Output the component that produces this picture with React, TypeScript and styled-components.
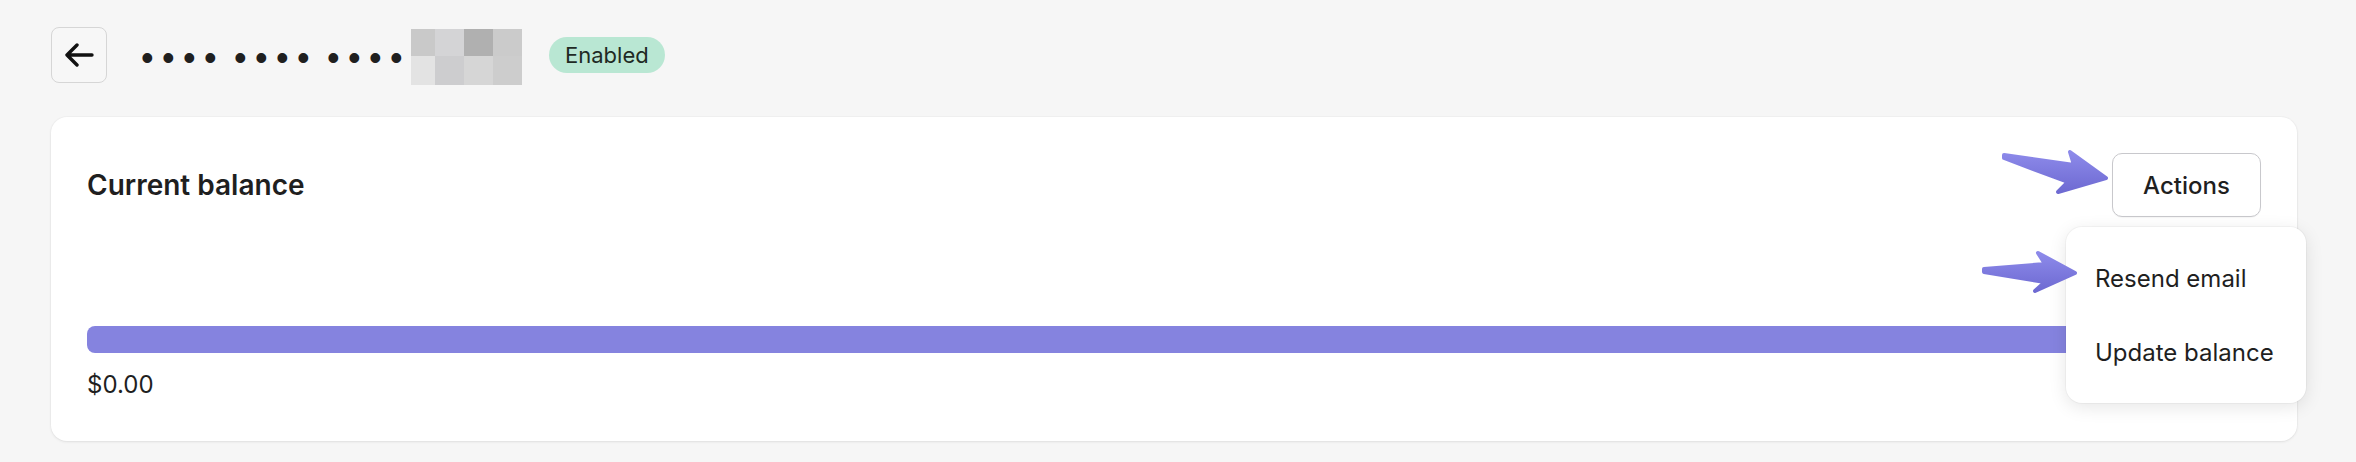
import React from "react";
import styled, { createGlobalStyle } from "styled-components";

const GlobalStyle = createGlobalStyle`
  html, body {
    margin: 0;
    padding: 0;
    background: #f6f6f6;
    font-family: Inter, "Noto Sans", "Liberation Sans", sans-serif;
    color: #1f1f1f;
  }
`;

const Page = styled.div`
  padding: 27px 59px 20px 51px;
  display: flex;
  flex-direction: column;
  gap: 34px;
`;

const TopBar = styled.div`
  display: flex;
  align-items: center;
  height: 56px;
`;

const BackButton = styled.button`
  width: 56px;
  height: 56px;
  box-sizing: border-box;
  border: 1px solid #d6d6d6;
  border-radius: 8px;
  background: #f7f7f7;
  display: flex;
  align-items: center;
  justify-content: center;
  padding: 0;
  margin-right: 34px;
`;

const Masked = styled.div`
  display: flex;
  gap: 9px;
`;

const DotGroup = styled.span`
  font-family: "Liberation Sans", Arial, sans-serif;
  font-size: 36px;
  letter-spacing: 8.4px;
  color: #1f1f1f;
  line-height: 56px;
  padding-top: 6px;
`;

const Blur = styled.div`
  display: grid;
  grid-template-columns: 24px 29px 29px 29px;
  grid-template-rows: 27px 29px;
  margin-right: 27px;
  margin-top: 4px;
`;

const BlurCell = styled.div<{ $c: string }>`
  background: ${(p) => p.$c};
`;

const Badge = styled.span`
  display: inline-flex;
  align-items: center;
  height: 36px;
  padding: 0 16px;
  border-radius: 18px;
  background: #b9e7d3;
  font-size: 22px;
  color: #1f2a24;
`;

const Card = styled.div`
  background: #ffffff;
  border-radius: 16px;
  box-shadow: 0 1px 3px rgba(0, 0, 0, 0.08), 0 0 0 1px rgba(0, 0, 0, 0.02);
  padding: 36px 36px 42px 36px;
  height: 324px;
  box-sizing: border-box;
`;

const CardHeader = styled.div`
  display: flex;
  align-items: center;
  justify-content: space-between;
  height: 64px;
`;

const Title = styled.h2`
  margin: 0;
  font-size: 28px;
  font-weight: 600;
  color: #1f1f1f;
`;

const ActionsWrap = styled.div`
  position: relative;
`;

const ActionsButton = styled.button`
  width: 149px;
  height: 64px;
  box-sizing: border-box;
  border: 1px solid #c8c8cc;
  border-radius: 10px;
  background: #ffffff;
  font-family: inherit;
  font-size: 24px;
  font-weight: 500;
  color: #1f1f1f;
  box-shadow: 0 1px 1px rgba(0, 0, 0, 0.04);
`;

const Pointer = styled.svg<{ $left: number; $top: number }>`
  position: absolute;
  left: ${(p) => p.$left}px;
  top: ${(p) => p.$top}px;
  overflow: visible;
  z-index: 3;
`;

const Menu = styled.div`
  position: absolute;
  top: 74px;
  right: -45px;
  width: 240px;
  box-sizing: border-box;
  padding: 14px 0;
  background: #ffffff;
  border-radius: 16px;
  box-shadow: 0 4px 18px rgba(0, 0, 0, 0.1), 0 0 0 1px rgba(0, 0, 0, 0.03);
  z-index: 2;
`;

const MenuItem = styled.div`
  height: 74px;
  display: flex;
  align-items: center;
  padding-left: 29px;
  font-size: 24px;
  color: #1f1f1f;
  white-space: nowrap;
`;

const Bar = styled.div`
  margin-top: 109px;
  height: 27px;
  border-radius: 8px;
  background: #8583df;
`;

const Amount = styled.div`
  margin-top: 17px;
  font-size: 24px;
  line-height: 29px;
  color: #1f1f1f;
`;

const blur = [
  "#c9c9c9",
  "#d4d4d6",
  "#b0b0b0",
  "#cbcbcb",
  "#e3e3e3",
  "#cdcdcf",
  "#d6d6d6",
  "#cdcdcd",
];

function ArrowShape({ d, id }: { d: string; id: string }) {
  return (
    <>
      <defs>
        <linearGradient id={id} x1="0" y1="0" x2="0" y2="1">
          <stop offset="0" stopColor="#8d8aea" />
          <stop offset="1" stopColor="#6e6ad2" />
        </linearGradient>
      </defs>
      <path
        d={d}
        fill={`url(#${id})`}
        stroke={`url(#${id})`}
        strokeWidth="4"
        strokeLinejoin="round"
      />
    </>
  );
}

export default function App() {
  return (
    <>
      <GlobalStyle />
      <Page>
        <TopBar>
          <BackButton aria-label="Back">
            <svg width="30" height="24" viewBox="0 0 30 24" fill="none">
              <path
                d="M28 12H3M13 2L3 12l10 10"
                stroke="#111"
                strokeWidth="3.4"
                strokeLinecap="round"
                strokeLinejoin="round"
              />
            </svg>
          </BackButton>
          <Masked>
            <DotGroup>••••</DotGroup>
            <DotGroup>••••</DotGroup>
            <DotGroup>••••</DotGroup>
          </Masked>
          <Blur>
            {blur.map((c, i) => (
              <BlurCell key={i} $c={c} />
            ))}
          </Blur>
          <Badge>Enabled</Badge>
        </TopBar>

        <Card>
          <CardHeader>
            <Title>Current balance</Title>
            <ActionsWrap>
              <Pointer $left={-112} $top={-7} width="110" height="50" viewBox="0 0 110 50">
                <ArrowShape
                  id="g1"
                  d="M4 9 L74 19 L70 6 L106 32 L58 46 L68 36 L4 12 Z"
                />
              </Pointer>
              <ActionsButton>Actions</ActionsButton>
              <Menu>
                <Pointer $left={-86} $top={22} width="100" height="46" viewBox="0 0 100 46">
                  <ArrowShape
                    id="g2"
                    d="M4 20 L65 15 L58 4 L95 24 L55 42 L65 33 L4 23 Z"
                  />
                </Pointer>
                <MenuItem>Resend email</MenuItem>
                <MenuItem>Update balance</MenuItem>
              </Menu>
            </ActionsWrap>
          </CardHeader>
          <Bar />
          <Amount>$0.00</Amount>
        </Card>
      </Page>
    </>
  );
}
